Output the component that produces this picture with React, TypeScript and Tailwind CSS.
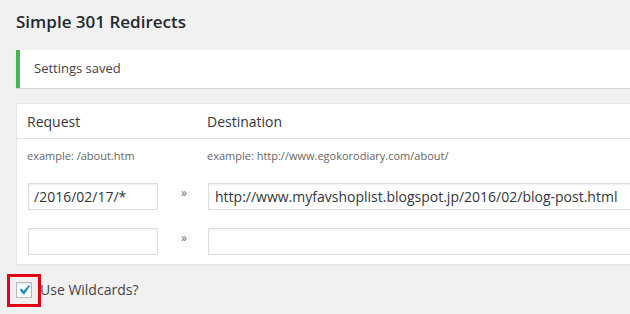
export default function App() {
  return (
    <div className="min-h-screen w-[630px] h-[314px] overflow-hidden bg-[#f1f1f1] font-['Open_Sans',sans-serif] text-[#444]">
      <div className="pl-4 pt-[10px]">
        <h1 className="text-[17px] leading-[24px] font-semibold text-[#23282d]">Simple 301 Redirects</h1>

        <div className="mt-4 w-[720px] h-[38px] bg-white border-l-4 border-[#46b450] shadow-[0_1px_1px_rgba(0,0,0,0.1)] flex items-center pl-[14px] text-[13px]">
          Settings saved
        </div>

        <div className="mt-[15px] w-[720px] bg-white border border-[#e5e5e5] shadow-[0_1px_1px_rgba(0,0,0,0.04)]">
          <div className="h-[35px] flex items-center border-b border-[#e1e1e1] text-[14px] text-[#32373c]">
            <div className="w-[180px] pl-[10px]">Request</div>
            <div className="pl-[10px]">Destination</div>
          </div>
          <div className="h-[34px] flex items-center text-[11px] text-[#666]">
            <div className="w-[180px] pl-[10px]">example: /about.htm</div>
            <div className="pl-[10px]">example: http://www.egokorodiary.com/about/</div>
          </div>
          <div className="pt-[10px] pb-[9px] flex flex-col gap-[18px]">
            <Row from="/2016/02/17/*" to="http://www.myfavshoplist.blogspot.jp/2016/02/blog-post.html" />
            <Row from="" to="" />
          </div>
        </div>

        <div className="mt-[14px] flex items-center">
          <span className="relative w-4 h-4 border border-[#b4b9be] bg-white shadow-[inset_0_1px_2px_rgba(0,0,0,0.1)] flex items-center justify-center">
            <svg width="20" height="20" viewBox="0 0 20 20" className="text-[#1e8cbe] shrink-0">
              <path d="M14.83 4.89l1.34.94-5.81 8.38H9.02L5.78 9.67l1.34-1.25 2.57 2.4z" fill="currentColor" />
            </svg>
            <span className="absolute left-[-10px] top-[-9px] w-[34px] h-[33px] border-[3px] border-[#e60012]" />
          </span>
          <span className="ml-[8px] text-[14px] text-[#444]">Use Wildcards?</span>
        </div>
      </div>
    </div>
  );
}

function Row({ from, to }: { from: string; to: string }) {
  return (
    <div className="flex items-center h-[27px]">
      <div className="w-[180px] pl-[11px] flex items-center">
        <div className="w-[130px] h-[27px] border border-[#ddd] shadow-[inset_0_1px_2px_rgba(0,0,0,0.07)] flex items-center px-[5px] text-[14px] text-[#32373c]">
          {from}
        </div>
        <span className="ml-[23px] text-[12px] leading-none text-[#5b6f8a] -mt-[8px]">»</span>
      </div>
      <div className="pl-[11px] flex-1">
        <div className="w-[520px] h-[27px] border border-[#ddd] shadow-[inset_0_1px_2px_rgba(0,0,0,0.07)] flex items-center px-[6px] text-[14px] text-[#32373c] whitespace-nowrap">
          {to}
        </div>
      </div>
    </div>
  );
}
